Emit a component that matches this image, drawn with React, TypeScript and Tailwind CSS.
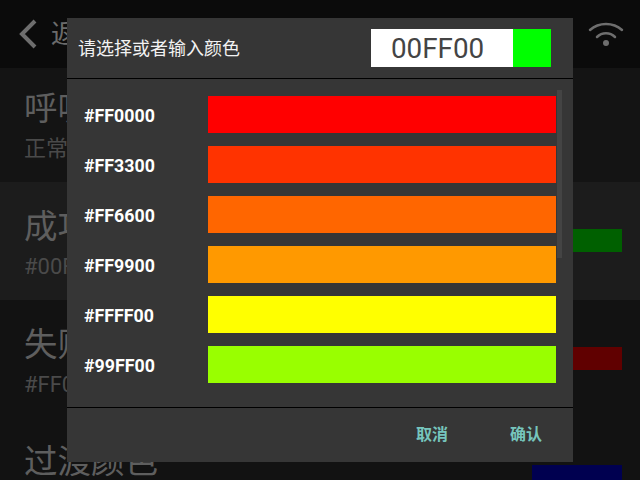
const font = { fontFamily: '"Roboto", "Noto Sans CJK SC", sans-serif' };

const colors = ["#FF0000", "#FF3300", "#FF6600", "#FF9900", "#FFFF00", "#99FF00"];
const rows = [
  { title: "呼吸灯颜色", sub: "正常状态", bg: "bg-[#141414]", h: "h-[114px]", bar: "", pt: "pt-[2px]" },
  { title: "成功颜色", sub: "#00FF00", bg: "bg-[#1c1c1c]", h: "h-[118px]", bar: "bg-[#006000]", pt: "pt-[6px]" },
  { title: "失败颜色", sub: "#FF0000", bg: "bg-[#121212]", h: "h-[118px]", bar: "bg-[#600000]", pt: "pt-[6px]" },
  { title: "过渡颜色", sub: "#0000FF", bg: "bg-[#121212]", h: "h-[118px]", bar: "bg-[#000050]", pt: "pt-[4px]" },
];

export default function App() {
  return (
    <div className="relative w-[640px] h-[480px] overflow-hidden bg-[#121212]" style={font}>
      <div className="h-[68px] bg-[#0b0b0b] flex items-center justify-between pl-[18px] pr-[16px]">
        <div className="flex items-center gap-[13px] text-[26px] text-[#6b6b6b]">
          <svg width="20" height="30" viewBox="0 0 20 30" fill="none" stroke="#6e6e6e" strokeWidth="4">
            <path d="M17 2 L4 15 L17 28" />
          </svg>
          <span>返回</span>
        </div>
        <svg width="36" height="28" viewBox="0 0 36 28" fill="none" stroke="#6e6e6e" strokeWidth="2.5" strokeLinecap="round">
          <path d="M2 10 C11 2 25 2 34 10" />
          <path d="M9 17 C14 12 22 12 27 17" />
          <circle cx="18" cy="23" r="3" fill="#6e6e6e" stroke="none" />
        </svg>
      </div>
      {rows.map((r) => (
        <div key={r.title} className={`${r.h} ${r.bg} flex items-center justify-between pl-[24px] pr-[18px]`}>
          <div className={`flex flex-col gap-[4px] ${r.pt}`}>
            <span className="text-[33.5px] leading-[42px] text-[#5e5e5e]">{r.title}</span>
            <span className="text-[22px] leading-[30px] text-[#4a4a4a]">{r.sub}</span>
          </div>
          {r.bar && <div className={`w-[90px] h-[23px] mb-[2px] ${r.bar}`} />}
        </div>
      ))}

      <div className="absolute left-[67px] top-[18px] w-[506px] h-[444px] bg-[#363636] flex flex-col">
        <div className="h-[60px] shrink-0 flex items-center justify-between pl-[11px] pr-[22px] border-b border-black box-content">
          <span className="text-[18px] text-[#f2f2f2]">请选择或者输入颜色</span>
          <div className="flex w-[180px] h-[38px]">
            <div className="w-[142px] bg-white text-[27.8px] leading-[40px] text-[#444444] pl-[20px]">00FF00</div>
            <div className="w-[38px] bg-[#00FF00]" />
          </div>
        </div>
        <div className="relative flex-1 flex flex-col gap-[13px] pt-[17px] pl-[17px]">
          {colors.map((c) => (
            <div key={c} className="flex items-center h-[37px]">
              <span className="w-[124px] text-[17.8px] leading-[39px] mt-[2px] font-bold text-white">{c}</span>
              <div className="w-[348px] h-[37px] -mt-px" style={{ backgroundColor: c }} />
            </div>
          ))}
          <div className="absolute left-[490px] top-[11px] w-[5px] h-[168px] bg-[#444444]" />
        </div>
        <div className="h-[54px] shrink-0 border-t border-black box-content flex items-center justify-end gap-[62px] pr-[31px]">
          <span className="text-[16px] font-bold text-[#76c5bd]">取消</span>
          <span className="text-[16px] font-bold text-[#76c5bd]">确认</span>
        </div>
      </div>
    </div>
  );
}
